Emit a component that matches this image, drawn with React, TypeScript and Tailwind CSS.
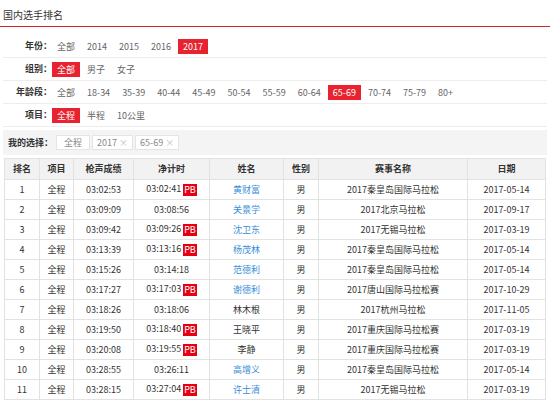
import React, { useState } from 'react';

const years = ['全部', '2014', '2015', '2016', '2017'];
const groups = ['全部', '男子', '女子'];
const ages = ['全部', '18-34', '35-39', '40-44', '45-49', '50-54', '55-59', '60-64', '65-69', '70-74', '75-79', '80+'];
const events = ['全程', '半程', '10公里'];

type Row = {
  rank: number;
  gun: string;
  net: string;
  pb: boolean;
  name: string;
  link: boolean;
  race: string;
  date: string;
};

const rows: Row[] = [
  { rank: 1, gun: '03:02:53', net: '03:02:41', pb: true, name: '黄财富', link: true, race: '2017秦皇岛国际马拉松', date: '2017-05-14' },
  { rank: 2, gun: '03:09:09', net: '03:08:56', pb: false, name: '关景学', link: true, race: '2017北京马拉松', date: '2017-09-17' },
  { rank: 3, gun: '03:09:42', net: '03:09:26', pb: true, name: '沈卫东', link: true, race: '2017无锡马拉松', date: '2017-03-19' },
  { rank: 4, gun: '03:13:39', net: '03:13:16', pb: true, name: '杨茂林', link: true, race: '2017秦皇岛国际马拉松', date: '2017-05-14' },
  { rank: 5, gun: '03:15:26', net: '03:14:18', pb: false, name: '范德利', link: true, race: '2017秦皇岛国际马拉松', date: '2017-05-14' },
  { rank: 6, gun: '03:17:27', net: '03:17:03', pb: true, name: '谢德利', link: true, race: '2017唐山国际马拉松赛', date: '2017-10-29' },
  { rank: 7, gun: '03:18:26', net: '03:18:06', pb: false, name: '林木根', link: false, race: '2017杭州马拉松', date: '2017-11-05' },
  { rank: 8, gun: '03:19:50', net: '03:18:40', pb: true, name: '王晓平', link: false, race: '2017重庆国际马拉松赛', date: '2017-03-19' },
  { rank: 9, gun: '03:20:08', net: '03:19:55', pb: true, name: '李静', link: false, race: '2017重庆国际马拉松赛', date: '2017-03-19' },
  { rank: 10, gun: '03:28:55', net: '03:26:11', pb: false, name: '高增义', link: true, race: '2017秦皇岛国际马拉松', date: '2017-05-14' },
  { rank: 11, gun: '03:28:15', net: '03:27:04', pb: true, name: '许士清', link: true, race: '2017无锡马拉松', date: '2017-03-19' },
];

function FilterRow({ label, options, active, onPick }: { label: string; options: string[]; active: string; onPick: (v: string) => void }) {
  return (
    <div className="flex items-center h-[23px] border-b border-[#ededed]">
      <span className="w-[49px] text-right font-bold text-[#333] shrink-0 whitespace-nowrap">{label}：</span>
      <div className="flex items-center gap-[2px]">
        {options.map((o) => (
          <button
            key={o}
            onClick={() => onPick(o)}
            className={`h-[15px] leading-[15px] px-[5px] whitespace-nowrap ${o === active ? 'bg-[#e8232f] text-white' : 'text-[#666]'}`}
          >
            {o}
          </button>
        ))}
      </div>
    </div>
  );
}

export default function App() {
  const [year, setYear] = useState('2017');
  const [group, setGroup] = useState('全部');
  const [age, setAge] = useState('65-69');
  const [event, setEvent] = useState('全程');

  const cell = 'border border-[#e2e2e2] h-[20px] p-0 leading-[12px] whitespace-nowrap';

  return (
    <div className="w-[550px] h-[400px] overflow-hidden bg-white text-[9px] leading-[12px] text-[#333]" style={{ fontFamily: '"Noto Sans CJK SC", "Noto Sans", sans-serif' }}>
      {/* Title */}
      <div className="h-[27px] pl-[3px] pt-[8px] text-[10px] leading-[14px] text-[#333] border-b border-[#d3252c]">国内选手排名</div>

      {/* Filters */}
      <div className="px-[3px] mt-[8px]">
        <FilterRow label="年份" options={years} active={year} onPick={setYear} />
        <FilterRow label="组别" options={groups} active={group} onPick={setGroup} />
        <FilterRow label="年龄段" options={ages} active={age} onPick={setAge} />
        <FilterRow label="项目" options={events} active={event} onPick={setEvent} />
      </div>

      {/* My selection */}
      <div className="mx-[3px] mt-[3px] h-[25px] bg-[#f4f4f4] flex items-center pl-[5px] gap-[2px]">
        <span className="font-bold text-[#333] mr-[1px]">我的选择：</span>
        <span className="h-[15px] leading-[13px] px-[7px] bg-white border border-[#e4e4e4] text-[#888]">{event}</span>
        <span className="h-[15px] leading-[13px] px-[4px] bg-white border border-[#e4e4e4] text-[#888]">
          {year} <span className="text-[#bbb]">×</span>
        </span>
        <span className="h-[15px] leading-[13px] px-[4px] bg-white border border-[#e4e4e4] text-[#888]">
          {age} <span className="text-[#bbb]">×</span>
        </span>
      </div>

      {/* Table */}
      <table className="ml-[4px] mt-[3px] w-[541px] border-collapse table-fixed text-center">
        <colgroup>
          <col className="w-[35px]" />
          <col className="w-[34px]" />
          <col className="w-[60px]" />
          <col className="w-[76px]" />
          <col className="w-[74px]" />
          <col className="w-[35px]" />
          <col className="w-[149px]" />
          <col className="w-[78px]" />
        </colgroup>
        <thead>
          <tr className="bg-[#f2f2f2]">
            {['排名', '项目', '枪声成绩', '净计时', '姓名', '性别', '赛事名称', '日期'].map((h) => (
              <th key={h} className={`${cell} h-[21px] font-bold`}>{h}</th>
            ))}
          </tr>
        </thead>
        <tbody>
          {rows.map((r) => (
            <tr key={r.rank}>
              <td className={cell}>{r.rank}</td>
              <td className={cell}>全程</td>
              <td className={cell}>{r.gun}</td>
              <td className={cell}>
                {r.net}
                {r.pb && <span className="ml-[2px] inline-block align-middle bg-[#e60012] text-white h-[12px] leading-[12px] px-[1px]">PB</span>}
              </td>
              <td className={`${cell} ${r.link ? 'text-[#3a8ed8]' : 'text-[#333]'}`}>{r.name}</td>
              <td className={cell}>男</td>
              <td className={cell}>{r.race}</td>
              <td className={cell}>{r.date}</td>
            </tr>
          ))}
        </tbody>
      </table>
    </div>
  );
}
